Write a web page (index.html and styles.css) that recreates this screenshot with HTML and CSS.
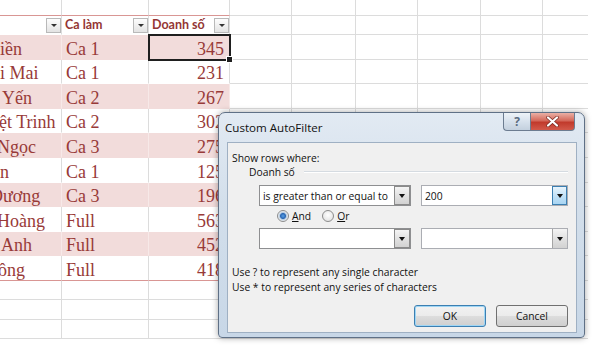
FILE: index.html
```html
<!DOCTYPE html>
<html lang="vi">
<head>
  <meta charset="UTF-8" />
  <meta name="viewport" content="width=device-width, initial-scale=1.0" />
  <title>Custom AutoFilter</title>
  <link rel="stylesheet" href="styles.css">
</head>
<body>
  <div class="sheet" id="sheet"></div>

  <div class="dialog">
    <div class="titlebar">
      <span class="title">Custom AutoFilter</span>
      <div class="caption">
        <span class="cap help">?</span>
        <span class="cap close">
          <svg width="13" height="11" viewBox="0 0 13 11">
            <path d="M2 1.5 L11 9.5 M11 1.5 L2 9.5" stroke="#7a2a22" stroke-width="3.6" stroke-linecap="round" />
            <path d="M2 1.5 L11 9.5 M11 1.5 L2 9.5" stroke="#fff" stroke-width="2.2" stroke-linecap="round" />
          </svg>
        </span>
      </div>
    </div>

    <div class="client">
      <p class="label">Show rows where:</p>
      <div class="group"><span>Doanh số</span></div>

      <div class="crit-row">
        <div class="combo op"><span>is greater than or equal to</span><i class="drop"></i></div>
        <div class="combo val"><span>200</span><i class="drop hot"></i></div>
      </div>

      <div class="radios">
        <span class="radio on"></span><span class="rlabel"><u>A</u>nd</span>
        <span class="radio"></span><span class="rlabel"><u>O</u>r</span>
      </div>

      <div class="crit-row">
        <div class="combo op"><span></span><i class="drop"></i></div>
        <div class="combo val"><span></span><i class="drop"></i></div>
      </div>

      <p class="hint">Use ? to represent any single character</p>
      <p class="hint">Use * to represent any series of characters</p>

      <div class="actions">
        <span class="btn default">OK</span>
        <span class="btn">Cancel</span>
      </div>
    </div>
  </div>

  <script>
    // name (visible part), shift, ca, doanh so
    const rows = [
      ["iền", 0, "Ca 1", 345],
      ["i Mai", 0, "Ca 1", 231],
      ["Yến", 2, "Ca 2", 267],
      ["ệt Trinh", -1, "Ca 2", 302],
      ["Ngọc", -3, "Ca 3", 275],
      ["n", 0, "Ca 1", 125],
      ["Dương", -10, "Ca 3", 196],
      ["Hoàng", -3, "Full", 563],
      ["Anh", 1, "Full", 452],
      ["ông", -2, "Full", 418]
    ];

    const sheet = document.getElementById("sheet");

    function cell(cls, html) {
      const d = document.createElement("div");
      d.className = "cell " + cls;
      if (html !== undefined) d.innerHTML = html;
      sheet.appendChild(d);
      return d;
    }
    function blanks(n) {
      for (let i = 0; i < n; i++) cell("");
    }

    cell("above"); cell("above"); cell("above"); blanks(6);

    ["", "Ca làm", "Doanh số"].forEach(t => {
      cell("head", `<span>${t}</span><i class="filter"></i>`);
    });
    blanks(6);

    rows.forEach((r, i) => {
      let cls = "tbl";
      if (i % 2 === 0) cls += " band";
      if (i === rows.length - 1) cls += " last";
      cell(cls + " name", `<span style="margin-left:${r[1]}px">${r[0]}</span>`);
      cell(cls, r[2]);
      const num = cell(cls + " num", r[3]);
      if (i === 0) num.classList.add("selected");
      blanks(6);
    });

    for (let i = 0; i < 3; i++) blanks(9);
  </script>
</body>
</html>
```

FILE: styles.css
```css
body {
  margin: 0;
  background: #fff;
  font-family: 'Open Sans', sans-serif;
}

/* worksheet */
.sheet {
  display: grid;
  grid-template-columns: 62px 87px 81px 62px 64px 62px 63px 62px 45px;
  grid-template-rows: 16px 19px repeat(10, 24.6px) repeat(3, 19.5px);
  width: 588px;
}
.cell {
  box-sizing: border-box;
  display: flex;
  align-items: flex-end;
  overflow: hidden;
  white-space: nowrap;
  padding: 0 5px 0 4px;
  border-right: 1px solid #dcdcdc;
  border-bottom: 1px solid #dcdcdc;
  font-family: 'Liberation Serif', serif;
  font-size: 18px;
  line-height: 20px;
  color: #983a38;
}
.cell:nth-child(9n) {
  border-right: none;
}
.cell.above {
  border-bottom-color: #d99694;
}
.head {
  align-items: center;
  padding: 0 0 0 3px;
  border-bottom-color: #fff;
  font-family: Lato, sans-serif;
  font-weight: bold;
  font-size: 12.5px;
  color: #943634;
}
.filter {
  margin-left: auto;
  width: 15px;
  height: 15px;
  box-sizing: border-box;
  border: 1px solid #b9b9b9;
  background: linear-gradient(#fdfdfd, #e3e3e3);
  display: flex;
  align-items: center;
  justify-content: center;
}
.filter::after {
  content: "";
  border-left: 3px solid transparent;
  border-right: 3px solid transparent;
  border-top: 3px solid #333;
}
.tbl {
  border-bottom-color: #fff;
}
.tbl.band {
  background: #f2dcdb;
  border-bottom-color: #f2dcdb;
  border-right-color: #f7e9e8;
}
.tbl.last {
  border-bottom-color: #d99694;
}
.name {
  padding-left: 0;
}
.num {
  justify-content: flex-end;
}
.selected {
  position: relative;
  overflow: visible;
  outline: 2px solid #1f1f1f;
  outline-offset: -1px;
}
.selected::after {
  content: "";
  position: absolute;
  right: -4px;
  bottom: -4px;
  width: 5px;
  height: 5px;
  background: #1f1f1f;
  border: 1px solid #fff;
}

/* dialog */
.dialog {
  position: absolute;
  left: 218px;
  top: 112px;
  width: 367px;
  height: 226px;
  box-sizing: border-box;
  display: flex;
  flex-direction: column;
  border: 1px solid #5f7086;
  border-radius: 7px 7px 4px 4px;
  background: linear-gradient(#e2eaf3, #d3dfeb 40%, #c8d7e7);
  box-shadow: 0 0 6px rgba(0, 0, 0, 0.35);
  font-size: 10.3px;
  color: #111;
  white-space: nowrap;
}
.titlebar {
  height: 29px;
  display: flex;
  align-items: flex-start;
  padding: 0 9px 0 6px;
}
.title {
  line-height: 29px;
  font-size: 11.6px;
}
.caption {
  margin-left: auto;
  display: flex;
}
.cap {
  box-sizing: border-box;
  height: 18px;
  display: flex;
  align-items: center;
  justify-content: center;
  border: 1px solid #6c7c90;
  border-top: none;
}
.help {
  width: 27px;
  border-right: none;
  border-radius: 0 0 0 4px;
  background: linear-gradient(#eef3f8, #d7e1ec 50%, #c3d0de);
  font-weight: bold;
  font-size: 12px;
  color: #5a6b80;
}
.close {
  width: 45px;
  border-radius: 0 0 4px 0;
  background: linear-gradient(#eab0a5, #d4685a 45%, #c13a2c 55%, #d2594a);
}
.client {
  flex: 1;
  margin: 0 7px 4px 8px;
  padding: 8px 8px 0 4px;
  border: 1px solid #9fb0c3;
  background: #f0f0f0;
}
.label {
  margin: 0;
  line-height: 15px;
}
.group {
  display: flex;
  align-items: center;
  height: 12px;
  padding-left: 17px;
}
.group span {
  line-height: 12px;
}
.group::after {
  content: "";
  flex: 1;
  margin-left: 9px;
  border-top: 1px solid #d5dbe1;
  border-bottom: 1px solid #fff;
}
.crit-row {
  display: flex;
  gap: 10px;
  margin-top: 7px;
  padding-left: 27px;
}
.radios + .crit-row {
  margin-top: 5px;
}
.combo {
  box-sizing: border-box;
  height: 21px;
  display: flex;
  align-items: center;
  border: 1px solid #abadb3;
  background: #fff;
}
.combo.op {
  width: 154px;
  border-color: #8e8f91;
}
.combo.val {
  width: 149px;
}
.combo span {
  flex: 1;
  padding-left: 3px;
  overflow: hidden;
}
.drop {
  box-sizing: border-box;
  width: 15px;
  height: 19px;
  display: flex;
  align-items: center;
  justify-content: center;
  border-left: 1px solid #a5a5a5;
  background: linear-gradient(#f4f4f4, #e2e2e2 50%, #d2d2d2);
}
.combo.op .drop {
  width: 16px;
  border: 1px solid #8a8a8a;
}
.drop.hot {
  border: 1px solid #3c7fb1;
  background: linear-gradient(#e8f4fc, #c3e2f7 50%, #a9d5f3);
}
.drop::after {
  content: "";
  border-left: 3.5px solid transparent;
  border-right: 3.5px solid transparent;
  border-top: 4px solid #111;
}
.radios {
  display: flex;
  align-items: center;
  height: 14px;
  margin-top: 3px;
  padding-left: 45px;
}
.radio {
  box-sizing: border-box;
  width: 12px;
  height: 12px;
  border-radius: 50%;
  border: 1px solid #8c8c8c;
  background: radial-gradient(circle at 50% 40%, #fff, #dcdcdc);
}
.radio.on {
  background: radial-gradient(circle, #5aa0e6 0, #2a67b4 2.5px, #b7cbe0 3.5px, #eef2f6 5px);
}
.rlabel {
  margin: 0 11px 0 3px;
}
.hint {
  margin: 0;
  line-height: 15px;
}
.crit-row + .hint {
  margin-top: 16px;
}
.actions {
  display: flex;
  justify-content: flex-end;
  gap: 10px;
  margin-top: 10px;
}
.btn {
  box-sizing: border-box;
  width: 72px;
  height: 22px;
  display: flex;
  align-items: center;
  justify-content: center;
  border: 1px solid #707070;
  border-radius: 3px;
  background: linear-gradient(#f2f2f2, #ebebeb 50%, #dddddd 50%, #cfcfcf);
}
.btn.default {
  border-color: #3c7fb1;
  box-shadow: inset 0 0 0 1px #9fd6f5;
}
```
